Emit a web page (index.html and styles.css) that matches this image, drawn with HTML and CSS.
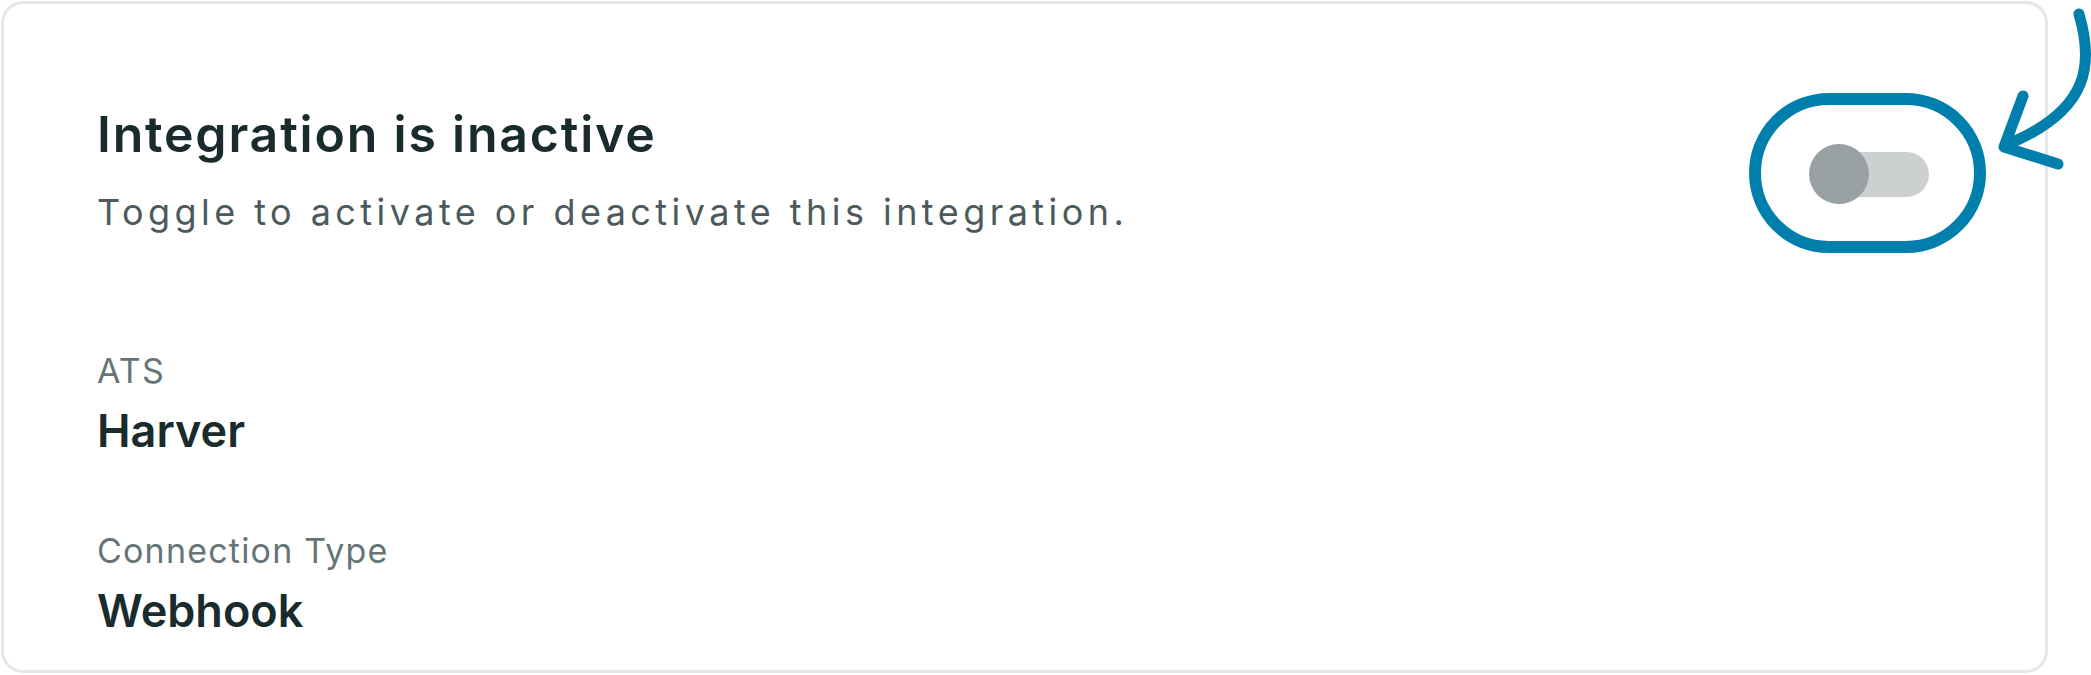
FILE: index.html
```html
<!DOCTYPE html>
<html lang="en">
<head>
<meta charset="utf-8">
<title>Integration</title>
<link rel="stylesheet" href="styles.css">
</head>
<body>
<div class="page">
  <section class="card">
    <header class="card-header">
      <div class="heading">
        <h1 class="title">Integration is inactive</h1>
        <p class="subtitle">Toggle to activate or deactivate this integration.</p>
      </div>
      <div class="toggle" role="switch" aria-checked="false">
        <span class="toggle-track"></span>
        <span class="toggle-knob"></span>
      </div>
    </header>
    <dl class="details">
      <div class="field">
        <dt class="label">ATS</dt>
        <dd class="value">Harver</dd>
      </div>
      <div class="field">
        <dt class="label">Connection Type</dt>
        <dd class="value">Webhook</dd>
      </div>
    </dl>
  </section>
  <svg class="annotation" width="2091" height="675" viewBox="0 0 2091 675" aria-hidden="true">
    <rect x="1755" y="99" width="225" height="148" rx="74" ry="74" fill="none" stroke="#007fad" stroke-width="12"/>
    <path d="M2079 14 C2093 62 2092 110 2006 145" fill="none" stroke="#007fad" stroke-width="11" stroke-linecap="round"/>
    <path d="M2023 96 L2004 147 L2058 164" fill="none" stroke="#007fad" stroke-width="11" stroke-linecap="round" stroke-linejoin="round"/>
  </svg>
</div>
</body>
</html>
```

FILE: styles.css
```css
* { box-sizing: border-box; }

html, body {
  margin: 0;
  padding: 0;
  background: #ffffff;
}

body {
  font-family: Inter, "Noto Sans", "Liberation Sans", sans-serif;
  width: 2091px;
  height: 675px;
  overflow: hidden;
}

.page {
  position: relative;
  width: 2091px;
  height: 675px;
  padding: 1px 43px 2px 1px;
}

.card {
  height: 100%;
  border: 3px solid #e5e7e7;
  border-radius: 22px;
  background: #ffffff;
  padding: 100px 116px 0 93px;
}

.card-header {
  display: flex;
  justify-content: space-between;
  align-items: flex-start;
}

.heading {
  display: flex;
  flex-direction: column;
  gap: 26px;
}

.title {
  margin: 0;
  font-size: 50px;
  line-height: 60px;
  font-weight: 600;
  color: #1a2b2d;
  letter-spacing: 1.8px;
}

.subtitle {
  margin: 0;
  font-size: 36px;
  line-height: 44px;
  font-weight: 400;
  color: #4c5a5c;
  letter-spacing: 4.45px;
}

.toggle {
  position: relative;
  width: 112px;
  height: 60px;
  margin-top: 40px;
  display: flex;
  align-items: center;
}

.toggle-track {
  display: block;
  width: 100%;
  height: 45px;
  border-radius: 23px;
  background: #ccd0d1;
}

.toggle-knob {
  position: absolute;
  left: -8px;
  top: 0;
  width: 60px;
  height: 60px;
  border-radius: 50%;
  background: #9aa1a2;
}

.details {
  margin: 117px 0 0;
  display: flex;
  flex-direction: column;
  gap: 73px;
}

.field {
  display: flex;
  flex-direction: column;
  gap: 13px;
}

.label {
  margin: 0;
  font-size: 34px;
  line-height: 40px;
  font-weight: 400;
  color: #677477;
  letter-spacing: 1.2px;
}

.value {
  margin: 0;
  font-size: 45px;
  line-height: 54px;
  font-weight: 600;
  color: #1a2b2d;
}

.annotation {
  position: absolute;
  top: 0;
  left: 0;
  pointer-events: none;
}
```
